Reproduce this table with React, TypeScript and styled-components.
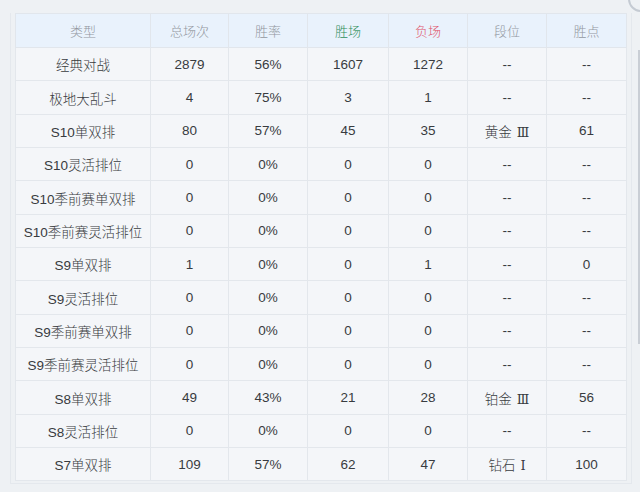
import styled, { createGlobalStyle } from "styled-components";

const GlobalStyle = createGlobalStyle`
  html, body {
    margin: 0;
    padding: 0;
    background: #eef1f4;
    overflow: hidden;
  }
  body {
    font-family: "Liberation Sans", "Noto Sans CJK SC", sans-serif;
  }
`;

const Page = styled.div`
  position: relative;
  width: 640px;
  height: 492px;
  padding: 13px 0 0 10px;
  box-sizing: border-box;
`;

const Panel = styled.div`
  width: 622px;
  padding: 0 6px 2px 4px;
  box-sizing: border-box;
  border-left: 1px solid #e4e8ed;
  border-right: 1px solid #e4e8ed;
  border-bottom: 1px solid #e4e8ed;
`;

const Table = styled.table`
  border-collapse: collapse;
  table-layout: fixed;
  width: 611px;
  background: #f4f6f9;
  border: 1px solid #e1e6ec;
`;

const HeadCell = styled.th<{ $tone?: "win" | "lose" }>`
  height: 33px;
  padding: 0;
  background: #e9f2fc;
  border: 1px solid #e1e6ec;
  font-weight: 300;
  font-size: 13px;
  color: ${(p) =>
    p.$tone === "win" ? "#2f8f5b" : p.$tone === "lose" ? "#e0526a" : "#92979e"};
  text-align: center;
`;

const Cell = styled.td`
  height: 32.35px;
  padding: 0;
  border: 1px solid #e3e7ec;
  font-size: 13.5px;
  font-weight: 300;
  color: #383b40;
  text-align: center;
  white-space: nowrap;
`;

const Numeral = styled.span`
  font-family: "DejaVu Serif", "Liberation Serif", serif;
  font-weight: 400;
  font-size: 13px;
  margin-left: 5px;
`;

const ScrollEdge = styled.div`
  position: absolute;
  right: 0;
  top: 50px;
  width: 2px;
  height: 294px;
  background: #c9ced5;
`;

const Ring = styled.div`
  position: absolute;
  right: -14px;
  top: -14px;
  width: 22px;
  height: 22px;
  border-radius: 50%;
  border: 2px solid #c5cbd3;
`;

const widths = [135, 78, 79, 81, 79, 79, 80];

const rows: string[][] = [
  ["经典对战", "2879", "56%", "1607", "1272", "--", "--"],
  ["极地大乱斗", "4", "75%", "3", "1", "--", "--"],
  ["S10单双排", "80", "57%", "45", "35", "黄金|Ⅲ", "61"],
  ["S10灵活排位", "0", "0%", "0", "0", "--", "--"],
  ["S10季前赛单双排", "0", "0%", "0", "0", "--", "--"],
  ["S10季前赛灵活排位", "0", "0%", "0", "0", "--", "--"],
  ["S9单双排", "1", "0%", "0", "1", "--", "0"],
  ["S9灵活排位", "0", "0%", "0", "0", "--", "--"],
  ["S9季前赛单双排", "0", "0%", "0", "0", "--", "--"],
  ["S9季前赛灵活排位", "0", "0%", "0", "0", "--", "--"],
  ["S8单双排", "49", "43%", "21", "28", "铂金|Ⅲ", "56"],
  ["S8灵活排位", "0", "0%", "0", "0", "--", "--"],
  ["S7单双排", "109", "57%", "62", "47", "钻石|Ⅰ", "100"],
];

function renderCell(c: string) {
  if (!c.includes("|")) return c;
  const [tier, div] = c.split("|");
  return (
    <>
      {tier}
      <Numeral>{div}</Numeral>
    </>
  );
}

export default function App() {
  return (
    <>
      <GlobalStyle />
      <Page>
        <Panel>
          <Table>
            <colgroup>
              {widths.map((w, i) => (
                <col key={i} style={{ width: w }} />
              ))}
            </colgroup>
            <thead>
              <tr>
                <HeadCell>类型</HeadCell>
                <HeadCell>总场次</HeadCell>
                <HeadCell>胜率</HeadCell>
                <HeadCell $tone="win">胜场</HeadCell>
                <HeadCell $tone="lose">负场</HeadCell>
                <HeadCell>段位</HeadCell>
                <HeadCell>胜点</HeadCell>
              </tr>
            </thead>
            <tbody>
              {rows.map((r) => (
                <tr key={r[0]}>
                  {r.map((c, i) => (
                    <Cell key={i}>{renderCell(c)}</Cell>
                  ))}
                </tr>
              ))}
            </tbody>
          </Table>
        </Panel>
        <ScrollEdge />
        <Ring />
      </Page>
    </>
  );
}
